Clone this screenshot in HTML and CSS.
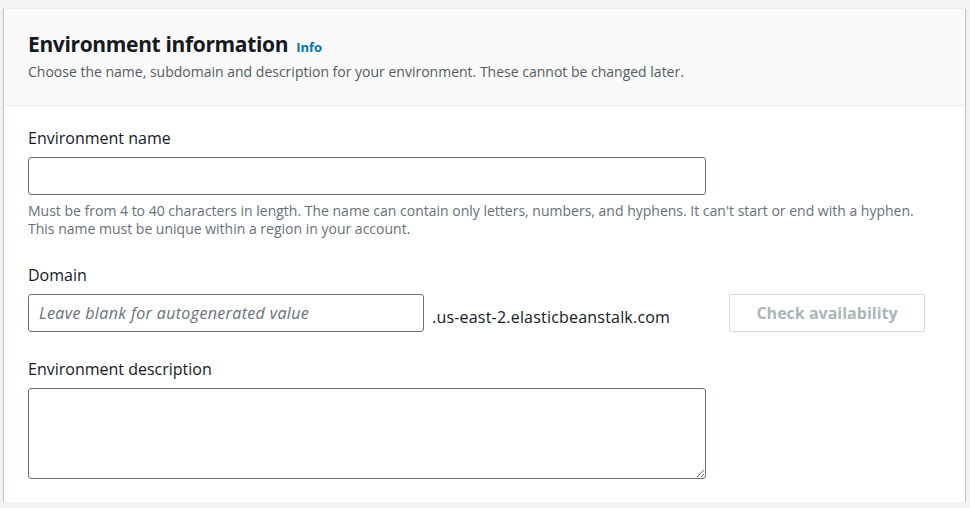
FILE: index.html
```html
<!DOCTYPE html>
<html>
<head>
<meta charset="utf-8">
<link rel="stylesheet" href="styles.css">
</head>
<body>
<div class="card">
  <div class="card-header">
    <h2 class="title">Environment information <a class="info" href="#">Info</a></h2>
    <p class="subtitle">Choose the name, subdomain and description for your environment. These cannot be changed later.</p>
  </div>
  <div class="card-body">
    <div class="field">
      <label class="label">Environment name</label>
      <input class="input wide" type="text">
      <p class="hint">Must be from 4 to 40 characters in length. The name can contain only letters, numbers, and hyphens. It can't start or end with a hyphen.<br>This name must be unique within a region in your account.</p>
    </div>
    <div class="field">
      <label class="label">Domain</label>
      <div class="domain-row">
        <input class="input domain" type="text" placeholder="Leave blank for autogenerated value">
        <span class="suffix">.us-east-2.elasticbeanstalk.com</span>
        <button class="btn" disabled>Check availability</button>
      </div>
    </div>
    <div class="field">
      <label class="label">Environment description</label>
      <textarea class="input wide area"></textarea>
    </div>
  </div>
</div>
</body>
</html>
```
FILE: styles.css
```css
* { box-sizing: border-box; }
html, body { margin: 0; padding: 0; }
body {
  background: #f2f3f3;
  font-family: "Open Sans", "Noto Sans", sans-serif;
  color: #16191f;
  padding: 8px 5px 0 4px;
}
.card {
  background: #fff;
  box-shadow: 0 1px 1px 0 rgba(0,28,36,0.3), 1px 1px 1px 0 rgba(0,28,36,0.15), -1px 1px 1px 0 rgba(0,28,36,0.15);
  border-top: 1px solid #eaeded;
}
.card-header {
  background: #fafafa;
  border-bottom: 1px solid #eaeded;
  padding: 21px 24px 23px;
}
.title {
  margin: 0;
  font-size: 21px;
  font-weight: 700;
  line-height: 28px;
  letter-spacing: -0.35px;
}
.info {
  color: #0073bb;
  font-size: 13px;
  font-weight: 700;
  line-height: 16px;
  text-decoration: none;
  margin-left: 3px;
  letter-spacing: 0;
}
.subtitle {
  margin: 4px 0 0;
  font-size: 14px;
  line-height: 20px;
  color: #545b64;
}
.card-body {
  padding: 21px 24px 23px;
  display: flex;
  flex-direction: column;
  gap: 26px;
}
.field { display: flex; flex-direction: column; }
.label {
  font-size: 16px;
  line-height: 22px;
  margin-bottom: 8px;
}
.input {
  border: 1px solid #687078;
  border-radius: 3px;
  height: 38px;
  font: inherit;
  font-size: 16px;
  padding: 0 10px;
  background: #fff;
}
.input.wide { width: 678px; }
.area { height: 91px; resize: vertical; }
.hint {
  margin: 7px 0 0;
  font-size: 14px;
  line-height: 18px;
  color: #687078;
}
.domain-row { display: flex; align-items: center; }
.domain { width: 396px; }
.domain::placeholder { color: #687078; font-style: italic; letter-spacing: 0.35px; }
.suffix {
  margin-left: 8px;
  font-size: 16px;
  letter-spacing: 0.2px;
  padding-top: 8px;
}
.btn {
  margin-left: auto;
  margin-right: 16px;
  width: 196px;
  height: 38px;
  border: 1px solid #d5dbdb;
  border-radius: 2px;
  background: #fff;
  color: #aab7b8;
  font: inherit;
  font-size: 16px;
  font-weight: 700;
}
```
